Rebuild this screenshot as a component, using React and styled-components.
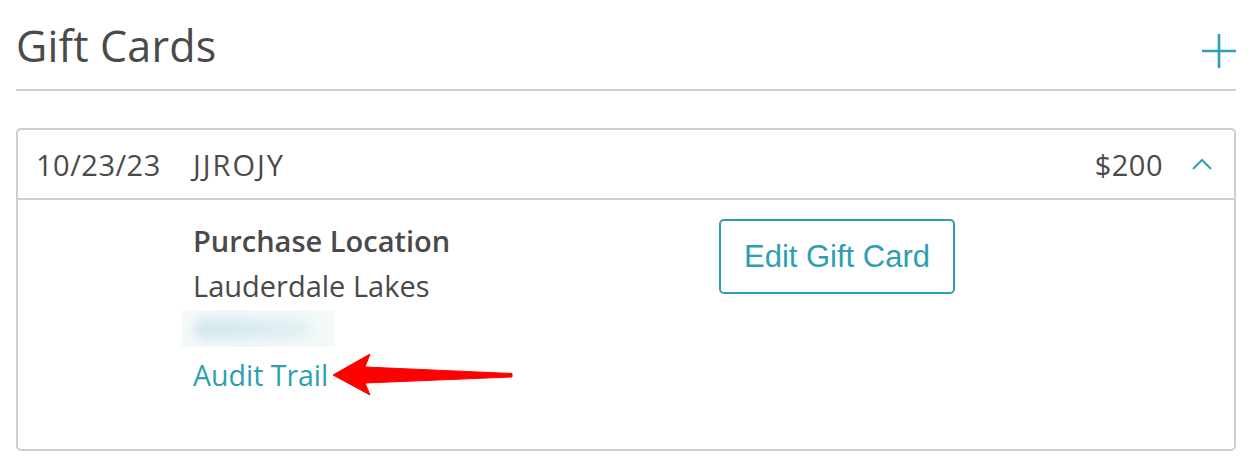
import React from "react";
import styled, { createGlobalStyle } from "styled-components";

const GlobalStyle = createGlobalStyle`
  body {
    margin: 0;
    background: #ffffff;
    font-family: "Open Sans", "Liberation Sans", sans-serif;
    color: #4a4a4a;
  }
`;

const PlusIcon = () => (
  <svg width="34" height="34" viewBox="0 0 34 34">
    <path d="M17 0 V34 M0 17 H34" stroke="#2e9fb3" strokeWidth="2.6" fill="none" />
  </svg>
);

const ChevronUp = () => (
  <svg width="20" height="12" viewBox="0 0 20 12">
    <path d="M1 11 L10 2 L19 11" stroke="#2e9fb3" strokeWidth="2" fill="none" />
  </svg>
);

const RedArrow = () => (
  <svg width="182" height="44" viewBox="0 0 182 44">
    <path
      d="M1 22 L38 1 L33 14 L180 20.5 L180 24 L33 30 L38 42 Z"
      fill="#ff0000"
      stroke="#ff0000"
      strokeWidth="1"
      strokeLinejoin="round"
    />
  </svg>
);

const App = () => {
  return (
    <>
      <GlobalStyle />
      <Page>
        <TitleRow>
          <Title>Gift Cards</Title>
          <AddButton aria-label="Add gift card">
            <PlusIcon />
          </AddButton>
        </TitleRow>

        <Card>
          <CardHeader>
            <DateCell>10/23/23</DateCell>
            <CodeCell>JJROJY</CodeCell>
            <Amount>$200</Amount>
            <Toggle aria-label="Collapse">
              <ChevronUp />
            </Toggle>
          </CardHeader>

          <CardBody>
            <Details>
              <Label>Purchase Location</Label>
              <Value>Lauderdale Lakes</Value>
              <Blurred />
              <LinkRow>
                <AuditLink href="#">Audit Trail</AuditLink>
                <ArrowWrap>
                  <RedArrow />
                </ArrowWrap>
              </LinkRow>
            </Details>
            <Actions>
              <EditButton>Edit Gift Card</EditButton>
            </Actions>
          </CardBody>
        </Card>
      </Page>
    </>
  );
};

export default App;

const Page = styled.div`
  padding: 0 12px 0 16px;
`;

const TitleRow = styled.div`
  display: flex;
  align-items: flex-end;
  justify-content: space-between;
  padding: 24px 0 22px 0;
  border-bottom: 2px solid #cfcfcf;
`;

const Title = styled.h1`
  margin: 0;
  font-size: 43px;
  line-height: 43px;
  font-weight: 400;
  color: #4a4a4a;
  letter-spacing: 0.2px;
`;

const AddButton = styled.button`
  display: flex;
  padding: 0;
  border: none;
  background: none;
  cursor: pointer;
  margin-bottom: -1px;
`;

const Card = styled.div`
  margin-top: 37px;
  border: 2px solid #cfcfcf;
  border-radius: 5px;
`;

const CardHeader = styled.div`
  display: flex;
  align-items: center;
  height: 68px;
  padding: 0 22px 0 18px;
  border-bottom: 2px solid #cfcfcf;
  font-size: 29px;
  color: #4a4a4a;
`;

const DateCell = styled.span`
  width: 157px;
  letter-spacing: 0.5px;
`;

const CodeCell = styled.span`
  flex: 1;
  letter-spacing: 2px;
`;

const Amount = styled.span`
  letter-spacing: 0.5px;
`;

const Toggle = styled.button`
  display: flex;
  margin-left: 29px;
  padding: 0;
  border: none;
  background: none;
  cursor: pointer;
`;

const CardBody = styled.div`
  display: grid;
  grid-template-columns: 526px auto;
  padding: 18px 0 51px 175px;
`;

const Details = styled.div`
  display: flex;
  flex-direction: column;
  font-size: 29px;
  line-height: 45px;
`;

const Label = styled.div`
  font-weight: 600;
  color: #4a4a4a;
`;

const Value = styled.div`
  color: #4a4a4a;
`;

const Blurred = styled.div`
  position: relative;
  width: 153px;
  height: 37px;
  margin: 2px 0 6px -11px;
  background: #f4f9fa;
  overflow: hidden;

  &::before {
    content: "";
    position: absolute;
    left: 12px;
    top: 8px;
    width: 118px;
    height: 22px;
    border-radius: 11px;
    background: linear-gradient(90deg, #d3e8ed, #dbecf0 55%, #e6f2f4);
    filter: blur(5px);
  }
`;

const LinkRow = styled.div`
  display: flex;
  align-items: center;
`;

const AuditLink = styled.a`
  color: #2e9fb3;
  text-decoration: none;
  font-size: 28.5px;
`;

const ArrowWrap = styled.span`
  display: flex;
  margin-left: 4px;
  margin-top: -2px;
`;

const Actions = styled.div`
  display: flex;
  align-items: flex-start;
`;

const EditButton = styled.button`
  width: 236px;
  height: 75px;
  margin-top: 1px;
  border: 2px solid #2e9fb3;
  border-radius: 5px;
  background: #ffffff;
  color: #2e9fb3;
  font-family: "Liberation Sans", Arial, sans-serif;
  font-size: 31px;
  cursor: pointer;
`;
